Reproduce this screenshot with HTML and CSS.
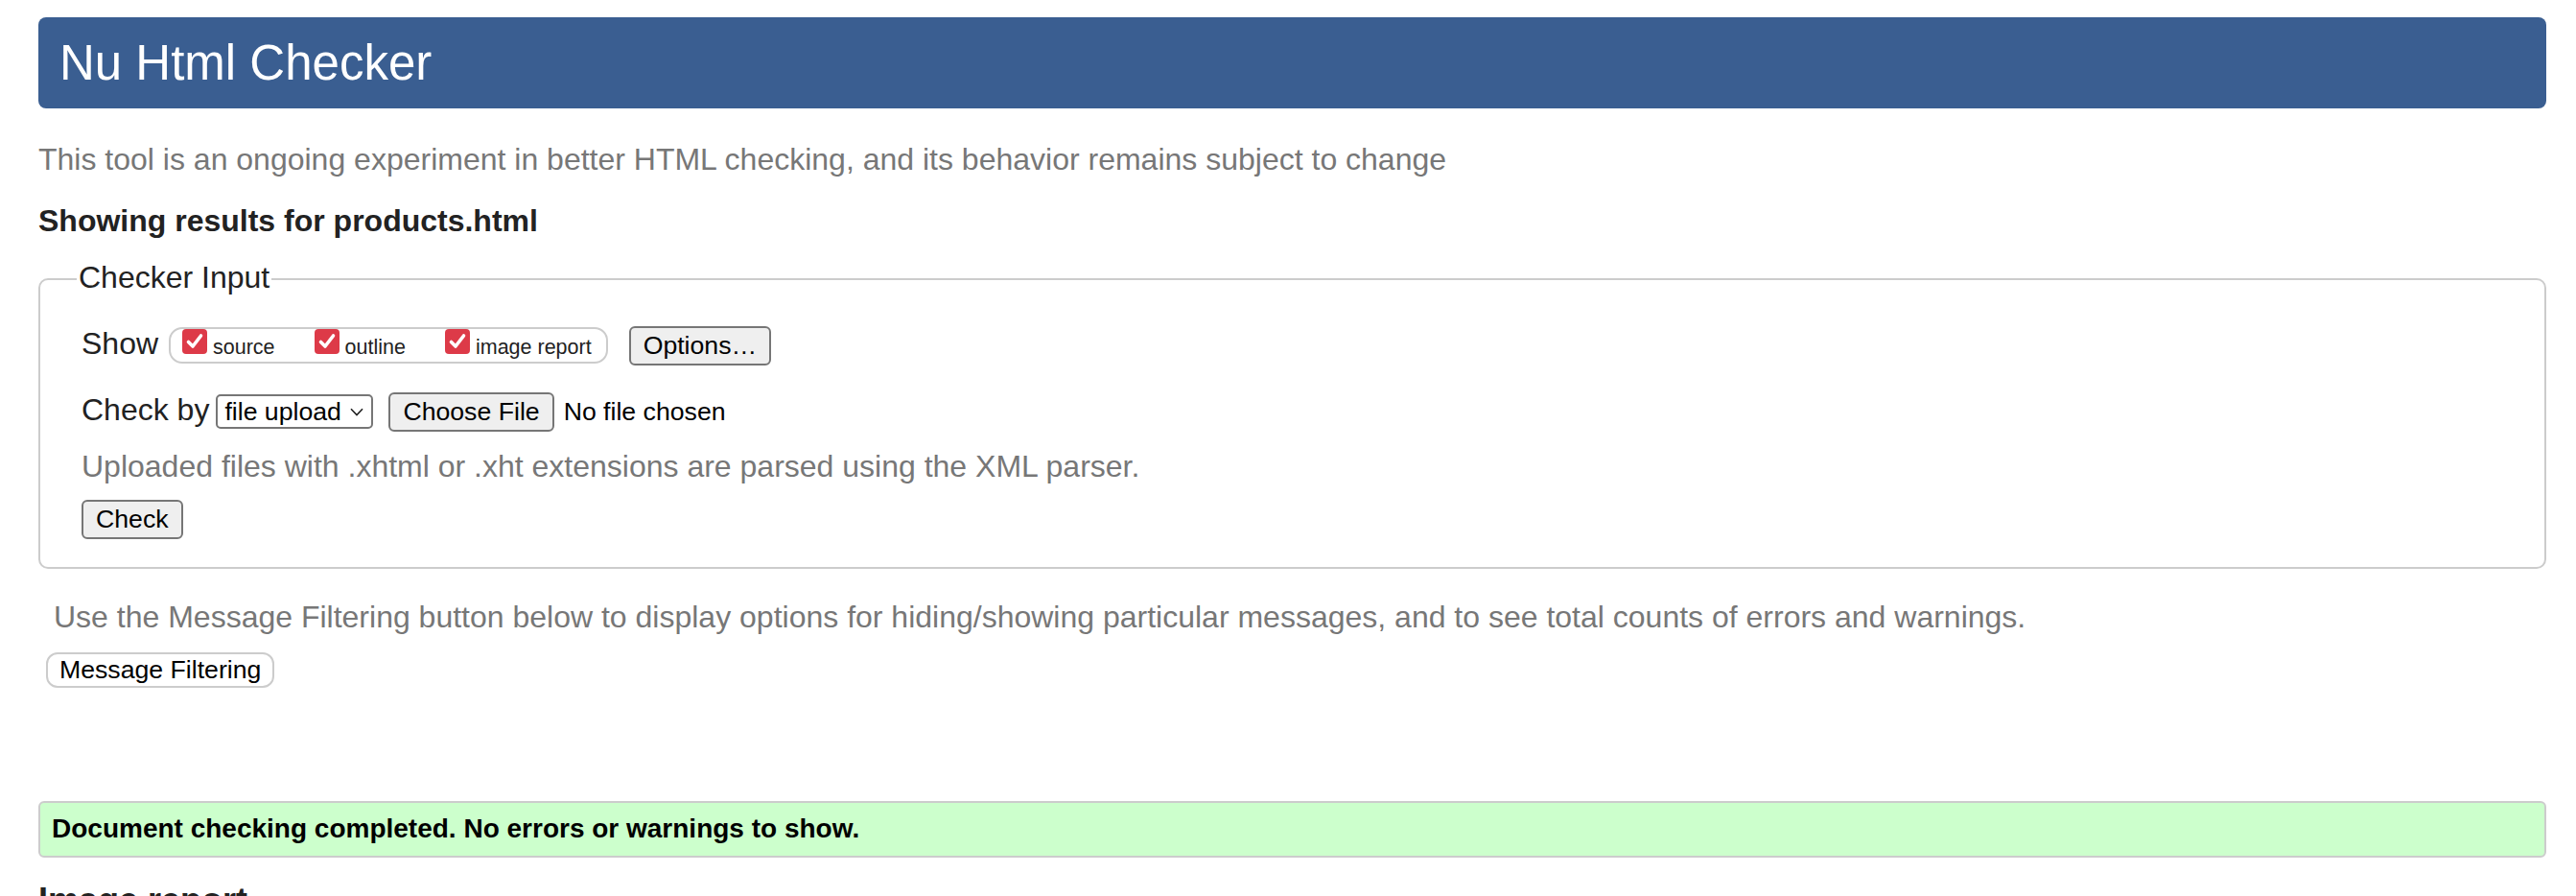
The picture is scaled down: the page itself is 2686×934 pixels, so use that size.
FILE: index.html
```html
<!DOCTYPE html>
<html lang="en">
<head>
<meta charset="utf-8">
<title>Showing results for products.html - Nu Html Checker</title>
<link rel="stylesheet" href="styles.css">
</head>
<body>
<header class="masthead"><h1>Nu Html Checker</h1></header>
<p class="intro">This tool is an ongoing experiment in better HTML checking, and its behavior remains subject to change</p>
<p class="results-for">Showing results for products.html</p>
<form class="checker-form">
  <fieldset class="checker">
    <legend>Checker Input</legend>
    <div class="row row-show">
      <span class="label label-show">Show</span>
      <span class="pill">
        <label class="opt"><svg class="box" width="26" height="26" viewBox="0 0 26 26"><rect width="26" height="26" rx="4" fill="#dd3a48"/><path d="M6.5 13.5 L11 18 L19.5 7" fill="none" stroke="#fff" stroke-width="3.6" stroke-linecap="round" stroke-linejoin="round"/></svg><span>source</span></label>
        <label class="opt"><svg class="box" width="26" height="26" viewBox="0 0 26 26"><rect width="26" height="26" rx="4" fill="#dd3a48"/><path d="M6.5 13.5 L11 18 L19.5 7" fill="none" stroke="#fff" stroke-width="3.6" stroke-linecap="round" stroke-linejoin="round"/></svg><span>outline</span></label>
        <label class="opt"><svg class="box" width="26" height="26" viewBox="0 0 26 26"><rect width="26" height="26" rx="4" fill="#dd3a48"/><path d="M6.5 13.5 L11 18 L19.5 7" fill="none" stroke="#fff" stroke-width="3.6" stroke-linecap="round" stroke-linejoin="round"/></svg><span>image report</span></label>
      </span>
      <button type="button" class="btn">Options…</button>
    </div>
    <div class="row row-check">
      <span class="label label-checkby">Check by</span>
      <span class="select">file upload<svg class="chev" width="14" height="9" viewBox="0 0 14 9"><path d="M1 1.2 L7 7.5 L13 1.2" fill="none" stroke="#222" stroke-width="1.6"/></svg></span>
      <button type="button" class="btn">Choose File</button>
      <span class="nofile">No file chosen</span>
    </div>
    <p class="hint">Uploaded files with .xhtml or .xht extensions are parsed using the XML parser.</p>
    <button type="button" class="btn btn-check">Check</button>
  </fieldset>
</form>
<p class="filter-note">Use the Message Filtering button below to display options for hiding/showing particular messages, and to see total counts of errors and warnings.</p>
<button type="button" class="btn-filter">Message Filtering</button>
<div class="success">Document checking completed. No errors or warnings to show.</div>
<h2 class="image-report">Image report</h2>
</body>
</html>
```
FILE: styles.css
```css
html, body {
  background: #fff;
}
body {
  margin: 0;
  padding: 18px 31px 40px 40px;
  font-family: "Liberation Sans", Arial, Helvetica, sans-serif;
  font-size: 32px;
  color: #222;
}

.masthead {
  background: #3a5e91;
  border-radius: 8px;
  height: 95px;
  padding-left: 22px;
}
.masthead h1 {
  margin: 0;
  font-size: 51px;
  font-weight: normal;
  line-height: 95px;
  color: #fff;
}

.intro {
  margin: 35px 0 0;
  line-height: 36px;
  color: #777;
}

.results-for {
  margin: 26px 0 0;
  line-height: 40px;
  font-weight: bold;
}

.checker-form {
  margin: 21px 0 0;
}
.checker {
  margin: 0;
  padding: 0 43px 29px;
  border: 2px solid #ccc;
  border-radius: 10px;
  min-width: 0;
}
.checker legend {
  margin-left: -5px;
  padding: 0 2px 4px;
  font-size: 32px;
  line-height: 36px;
  color: #222;
}

.row {
  display: flex;
  align-items: baseline;
}
.row-show {
  margin-top: 29px;
}
.row-check {
  margin-top: 28px;
}
.label {
  line-height: 36px;
}
.label-show {
  margin-right: 11px;
}
.label-checkby {
  margin-right: 7px;
}

.pill {
  display: flex;
  align-items: baseline;
  height: 38px;
  box-sizing: border-box;
  border: 2px solid #ccc;
  border-radius: 14px;
  padding: 0 15px 0 12px;
  margin-right: 22px;
}
.opt {
  display: flex;
  align-items: baseline;
  font-size: 21.5px;
  line-height: 24px;
  color: #222;
  margin-right: 41px;
}
.opt:last-child {
  margin-right: 0;
}
.box {
  display: block;
  margin-right: 6px;
}

.btn {
  font-family: inherit;
  font-size: 26.67px;
  height: 41px;
  box-sizing: border-box;
  padding: 0 13px;
  border: 2px solid #767676;
  border-radius: 6px;
  background: #efefef;
  color: #000;
  line-height: 37px;
}

.select {
  display: flex;
  align-items: center;
  justify-content: space-between;
  width: 164px;
  height: 36px;
  box-sizing: border-box;
  border: 2px solid #767676;
  border-radius: 5px;
  padding: 0 8px 0 7px;
  margin-right: 16px;
  font-size: 26.67px;
  line-height: 32px;
  color: #000;
  background: #fff;
}
.chev {
  display: block;
}
.nofile {
  margin-left: 10px;
  font-size: 26.67px;
  color: #000;
}

.hint {
  margin: 16px 0 0;
  line-height: 40px;
  color: #777;
}
.btn-check {
  display: block;
  margin-top: 15px;
}

.filter-note {
  margin: 30px 0 0 16px;
  line-height: 40px;
  color: #777;
}
.btn-filter {
  display: block;
  margin: 17px 0 0 8px;
  height: 37px;
  box-sizing: border-box;
  padding: 0 12px;
  border: 2px solid #ccc;
  border-radius: 12px;
  background: #fff;
  font-family: inherit;
  font-size: 26.67px;
  line-height: 33px;
  color: #000;
}

.success {
  margin-top: 118px;
  height: 59px;
  box-sizing: border-box;
  border: 2px solid #ccc;
  border-radius: 6px;
  background: #ccffcc;
  padding: 9px 12px 0;
  font-size: 28px;
  font-weight: bold;
  line-height: 36px;
  color: #000;
}

.image-report {
  margin: 23px 0 0;
  font-size: 36px;
  font-weight: bold;
  line-height: 44px;
}
```
